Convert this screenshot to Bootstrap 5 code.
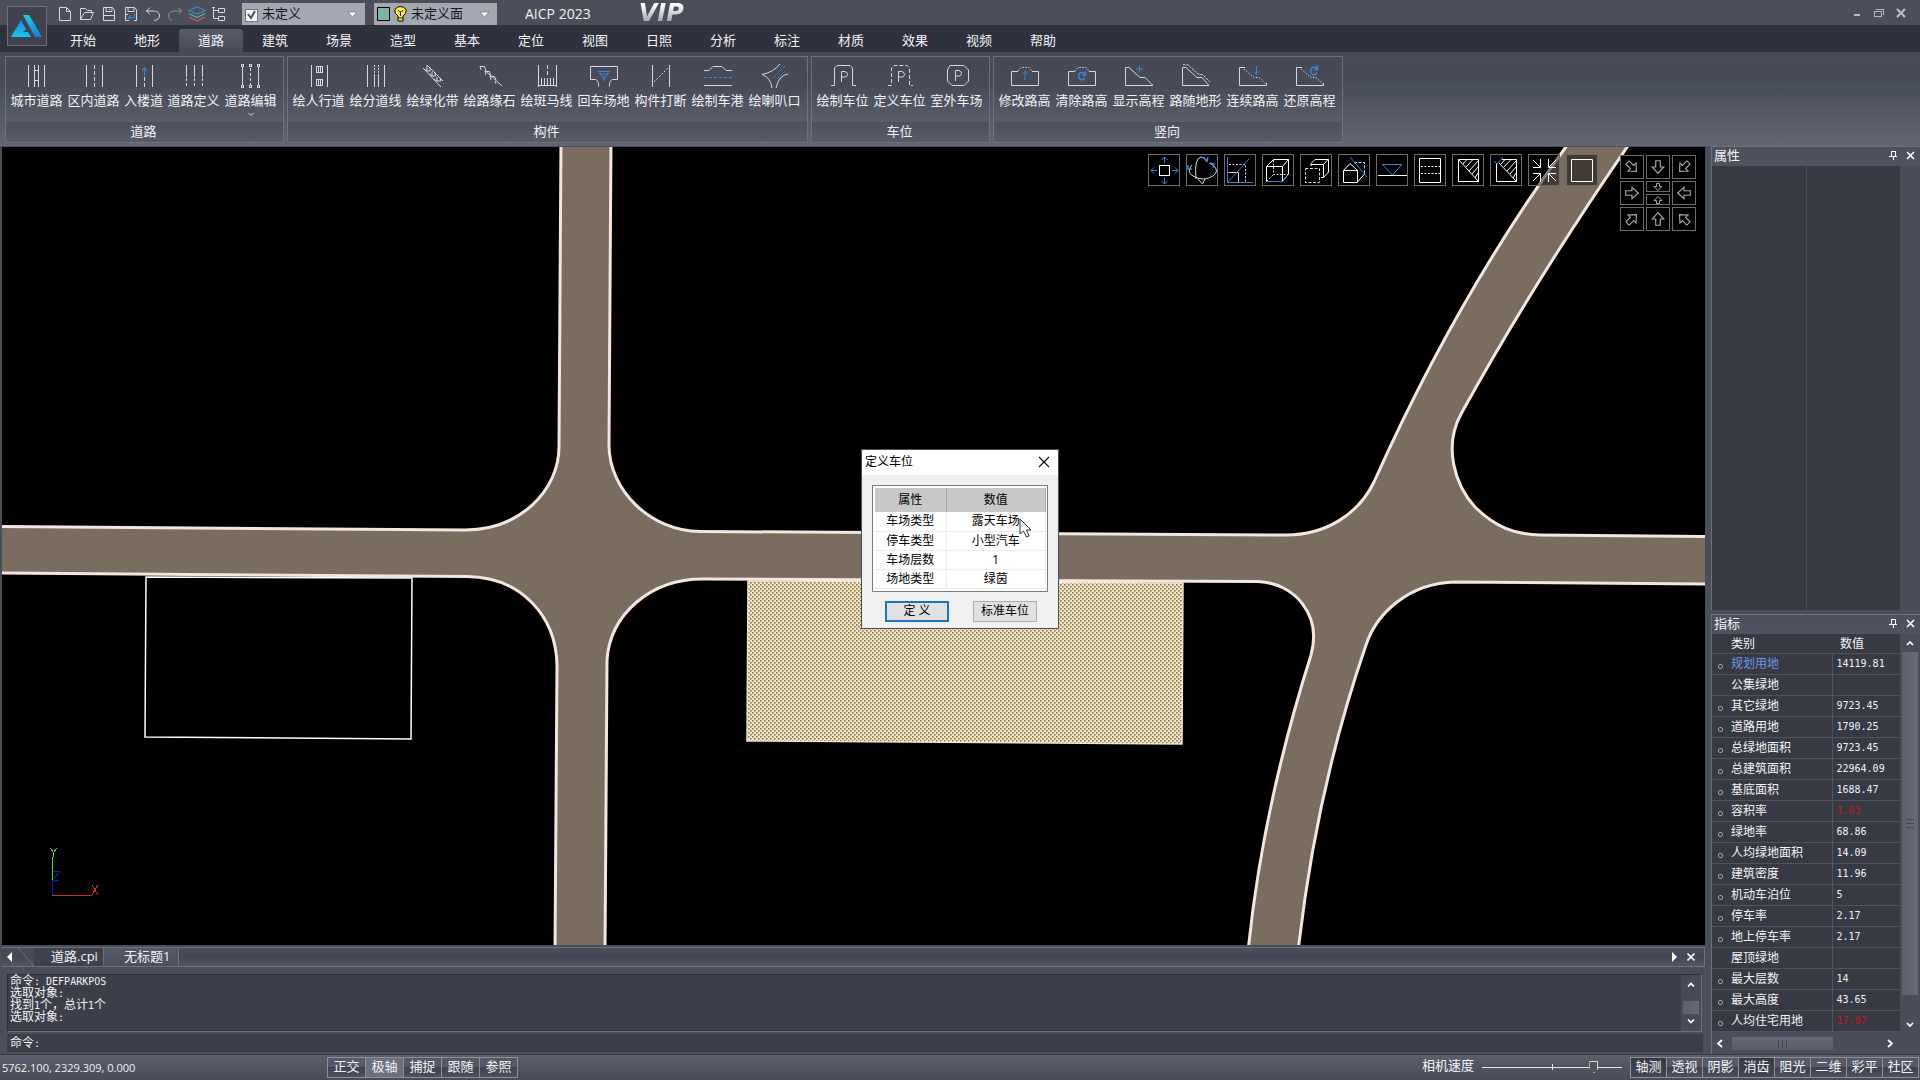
<!DOCTYPE html>
<html lang="zh-CN">
<head>
<meta charset="utf-8">
<meta name="viewport" content="width=device-width, initial-scale=1">
<title>AICP 2023</title>
<link href="https://cdn.jsdelivr.net/npm/bootstrap@5.3.0/dist/css/bootstrap.min.css" rel="stylesheet">
<style>
:root{--ui:"Open Sans","Noto Sans CJK SC",sans-serif;--edge:#6d707d;--dark:#373a43;--line:#50535f;}
body{font-family:var(--ui);font-size:13px;line-height:18px;color:#f2f3f6;background:#4a4d5a;overflow:hidden}
button,select,input{font:inherit;color:inherit}
button{background:none;border:0;padding:0}
svg{display:block}
.ln{fill:none;stroke:#d3d7e0;stroke-width:1}
.bl{stroke:#3f83d6}
.crisp{shape-rendering:crispEdges}

/* title bar and menu */
.app-head{background:linear-gradient(#4c4e5a 0 25px,#2f323d 25px)}
.logo-cell{width:51px;padding:6px 4px 6px 7px;background:linear-gradient(#4c4e5a 0 25px,#2f323d 25px)}
.logo-btn{width:40px;height:40px;border:1px solid #6b6e7b;background:#40434f;place-items:center}
.title-row{height:25px}
.quick-bar{padding:3px 12px 0 3px}
.quick{width:22px;height:22px;display:grid;place-items:center}
.combo{width:123px;height:22px;margin-top:3px;background:#a4a8b3;color:#15171c;padding:0 3px}
.combo+.combo{margin-left:9px}
.combo select{appearance:none;background:none;border:0;outline:0;padding:0 0 2px;flex:1;min-width:0;line-height:18px}
.combo input{appearance:none;width:13px;height:13px;margin:0;background:#f6f8fb;border:1px solid #6b7486}
.tick-wrap{position:relative;width:13px;height:13px}
.tick-wrap svg{position:absolute;left:0;top:0;pointer-events:none}
.app-name{line-height:27px;font-size:14px}
.vip{font:italic bold 24px/26px "DejaVu Sans",sans-serif;background:linear-gradient(#fff 20%,#a9adbd 80%);-webkit-background-clip:text;background-clip:text;color:transparent}
.win{width:22px;height:22px;display:grid;place-items:center}
.wins{padding-top:2px}
.menu-tabs{height:27px;padding-top:4px}
.menu-tab{width:64px;height:23px;line-height:22px;text-align:center;color:#f2f3f6;text-decoration:none;border-radius:3px 3px 0 0}
.menu-tab.active{background:linear-gradient(#595c69,#474a56)}

/* ribbon */
.ribbon{height:94px;padding:4px 5px 3px;gap:3px;background:linear-gradient(#494b58,#464b58 30%,#555865 65%,#626572)}
.rb-panel{border:1px solid var(--edge);background:linear-gradient(#464955,#474b57 35%,#595c69 76%,#4d505d 76%,#585b68);height:87px}
.rb-items{padding:7px 4px 0 2px;height:67px}
.rb-item{width:57px;display:flex;flex-direction:column;align-items:center}
.rb-item.narrow{width:43px}
.rb-item svg{margin-bottom:3px}
.rb-item span{white-space:nowrap}
.rb-item .tall{margin-bottom:1px}
.rb-item .down{margin:3px 0 0}
.rb-title{line-height:14px;text-align:center;padding-right:2px}

/* drawing area */
.left-pane{padding:1px 0 2px 2px;min-width:0}
.canvas{background:#000;position:relative;min-height:0;overflow:hidden}
.scene{position:absolute;inset:0;width:100%;height:100%}
.overlay{position:absolute;top:7px;right:9px;gap:22px}
.tools{gap:6px}
.vt{width:32px;height:32px;border:1px solid #6c6c69;background:rgba(0,0,0,.45);display:grid;place-items:center}
.pad{display:grid;grid-template-columns:repeat(3,24px);gap:2px;margin-top:1px}
.pad button{height:24px;border:1px solid #6c6c69;background:#000;display:grid;place-items:center}
.pad .halves{display:grid;gap:2px}
.pad .halves button{height:11px}
.pad svg{fill:none;stroke:#a8a8a6;stroke-width:1}

.dlg{position:absolute;left:859px;top:302px;width:198px;border:1px solid #4f4f4f;background:#f0f0f0;color:#000;font-size:12px}
.dlg-head{background:#fff;height:25px;padding:0 7px 2px 3px;font-size:12px}
.dlg-body{padding:10px 10px 6px}
.grid-box{border:1px solid #7c7c7c;background:#fff;padding:2px 1px 2px 2px}
.grid-box table{width:100%;border-collapse:collapse;table-layout:fixed;text-align:center}
.grid-box th{background:#c8c8c8;font-weight:400;height:24px;padding:0;border-right:1px solid #a8a8a8}
.grid-box td{height:19px;line-height:18px;padding:0;border:0 solid #ececec;border-width:0 1px 1px 0}
.dlg-foot{padding:9px 11px 0 13px}
.dlg-btn{width:64px;height:21px;background:#e1e1e1;border:1px solid #adadad;line-height:18px}
.dlg-btn.main{border:2px solid #1f72bd;line-height:16px}
.cursor{position:absolute;left:1017px;top:371px}

/* document tabs */
.doc-bar{height:20px;margin:2px 0 7px;border:1px solid var(--edge);border-width:1px 1px 1px 0;background:linear-gradient(#4b4e5b,#444753 50%,#525562)}
.doc-tab{color:#f2f3f6;text-decoration:none;height:18px;line-height:16px;border-right:1px solid var(--edge)}
.doc-tab.on{background:#3f424d;padding:0 5px 0 17px}
.doc-tab.off{background:linear-gradient(#565967,#4c4f5c);padding:0 8px 0 20px}
.cm{font-size:12px;line-height:12px}
.ml{font-family:"DejaVu Sans Mono",monospace;font-size:10px}
.history{height:58px;margin:0 3px 2px 5px;background:#3c3f4a;border:1px solid #2c2f38;border-color:#2c2f38 #6d707d #6d707d #2c2f38}
.history-text{padding:0 2px}
.history-text p{height:12px;margin:0;white-space:pre}
.sb{background:#484b57}
.history .sb{width:20px;padding:7px 0}
.cmd-line{height:18px;margin:0 2px 0 5px;background:#3c3f4a;padding:0 3px}
.cmd-line input{flex:1;background:none;border:0;outline:0}
.cmd-line label{line-height:17px}
.thumb{background:linear-gradient(90deg,#5d606d,#666976)}
.sb .thumb{width:16px;height:13px;margin-top:8px}

/* side panels */
.right-pane{width:215px;padding-left:6px;gap:4px}
.side{border:1px solid var(--edge);border-width:1px 0 0 1px}
.side-head{height:19px;padding:0 5px 2px 2px;background:linear-gradient(#4c4f5c,#505360)}
.side-head h2{font-size:13px;line-height:17px;font-weight:400;margin:0}
.prop-body{background:var(--dark);margin-right:20px;display:grid;grid-template-columns:94px 1fr}
.prop-body div+div{border-left:1px solid #4b4e59}
.idx{border-collapse:collapse;width:188px;table-layout:fixed;font-size:12px;background:var(--dark)}
.idx th{height:20px;line-height:19px;font-weight:400;padding:0 0 0 8px}
.idx th:first-child{padding-left:19px}
.idx td{height:21px;line-height:20px;padding:0 0 0 4px;white-space:nowrap}
.idx td:first-child{padding-left:6px}
.idx tr{border-bottom:1px solid var(--line)}
.idx td:first-child{border-right:1px solid var(--line)}
.idx i{display:inline-block;width:5px;height:5px;border:1px solid #9a9da6;border-radius:2px;margin-right:8px;vertical-align:-1px;visibility:hidden}
.idx .dot i{visibility:visible}
.idx .first a{color:#6f97e8}
.idx a{color:inherit;text-decoration:none}
.idx .red{color:#c4151b}
.vs{width:19px}
.vs .thumb{width:16px;height:343px;display:grid;place-items:center}
.hs{height:22px;padding:3px 26px 2px 4px}
.hs .thumb{width:101px;height:13px;display:grid;place-items:center;background:linear-gradient(#656875,#5a5d6a)}

/* status bar */
.status{height:26px;border-top:1px solid #363944;background:linear-gradient(#5b5e6b,#474a57);padding:2px 1px 3px 2px}
.coords{font-size:11px;line-height:22px;width:326px}
.sw{height:21px;width:37px;border:1px solid #8d909c;margin-left:-1px;background:linear-gradient(#555866 45%,#3f424e 50%,#4d505d);line-height:16px;padding-bottom:3px}
.sw.lit{background:#6c707e}
.sw.dk{background:linear-gradient(#363944,#444753)}
.sw-l .sw{width:39px}
.status label{line-height:17px}
.speed{appearance:none;width:140px;height:16px;margin:2px 9px 0 0;background:linear-gradient(#e4e6ec,#e4e6ec) 0 8px/100% 1px no-repeat,linear-gradient(#e4e6ec,#e4e6ec) 50% 5px/1px 6px no-repeat}
.speed::-webkit-slider-thumb{appearance:none;width:9px;height:12px;border:1px solid #d9dce3;background:#555;clip-path:polygon(0 0,100% 0,100% 65%,50% 100%,0 65%)}
</style>
</head>
<body class="vh-100 d-flex flex-column">

<header class="app-head d-flex">
  <div class="logo-cell"><button class="logo-btn d-grid" aria-label="应用菜单">
    <svg width="32" height="24" viewBox="0 0 32 24"><defs><linearGradient id="lg" x1="0" y1="0" x2="0" y2="1"><stop offset="0" stop-color="#1b86e8"/><stop offset="1" stop-color="#14c8f0"/></linearGradient><linearGradient id="lg2" x1="0" y1="0" x2="0" y2="1"><stop offset="0" stop-color="#12d0ee"/><stop offset="1" stop-color="#2277dd"/></linearGradient></defs><path d="M10 6L15 15L12 18H17L20 23H0Z" fill="url(#lg)"/><path d="M12 1H18L31 23H24Z" fill="url(#lg2)"/></svg></button></div>
  <div class="flex-grow-1 d-flex flex-column">
    <div class="title-row d-flex">
      <div class="quick-bar d-flex" role="toolbar" aria-label="快速访问">
        <button class="quick" aria-label="新建"><svg width="18" height="16" viewBox="0 0 18 16"><path class="ln" d="M3.500 1.500H10.500L14.500 5.500V14.500H3.500ZM10.500 1.500V5.500H14.500"/></svg></button>
        <button class="quick" aria-label="打开"><svg width="18" height="16" viewBox="0 0 18 16"><path class="ln" d="M2.500 13.500V2.500H7.500L9.500 4.500H13.500V6.500M2.500 13.500H12.500L15.500 6.500H6.500L2.500 13.500"/></svg></button>
        <button class="quick" aria-label="保存"><svg width="18" height="16" viewBox="0 0 18 16"><path class="ln" d="M3.500 1.500H12.500L14.500 3.500V14.500H3.500ZM6 1.500V5.500H12V1.500M4 9.500H14M9.500 3V4"/></svg></button>
        <button class="quick" aria-label="另存"><svg width="18" height="16" viewBox="0 0 18 16"><path class="ln" d="M7 14.500H3.500V1.500H12.500L14.500 3.500V14.500H12M6 1.500V5.500H12V1.500M4 8.500H6"/><path class="ln bl" d="M12.500 8V11.500H6.500M9 9L6.500 11.500L9 14"/></svg></button>
        <button class="quick" aria-label="撤销"><svg width="18" height="16" viewBox="0 0 18 16"><path class="ln" d="M6 1.500L2.500 5L6 8.500M2.500 5H10Q15.500 5.500 15.500 10Q15 14 10 14.500"/></svg></button>
        <button class="quick" aria-label="重做"><svg width="18" height="16" viewBox="0 0 18 16"><path fill="none" stroke="#8b8e99" d="M12 1.500L15.500 5L12 8.500M15.500 5H8Q2.500 5.500 2.500 10Q3 14 6 14.500"/></svg></button>
        <button class="quick" aria-label="图层"><svg width="18" height="16" viewBox="0 0 18 16" fill="none" stroke-width="1.300"><path stroke="#3f83d6" d="M9 1L17 4.500L9 8L1 4.500Z"/><path stroke="#4fb98a" d="M1 7.500L9 11.500L17 7.500"/><path stroke="#d2585c" d="M1 11L9 15L17 11"/></svg></button>
        <button class="quick" aria-label="结构"><svg width="18" height="16" viewBox="0 0 18 16"><path class="ln" d="M3.500 1V12.500H8M3.500 4.500H8M8.500 2.500H14.500V6.500H8.500ZM8.500 10.500H14.500V14.500H8.500ZM2 1.500H5"/></svg></button>
      </div>
      <div class="combo d-flex align-items-center gap-1 flex-shrink-0">
        <span class="tick-wrap"><input type="checkbox" id="lay" checked aria-label="图层可见"><svg width="13" height="13" viewBox="0 0 13 13"><path d="M3 6L6 10L10 3" fill="none" stroke="#3d4f80" stroke-width="2"/></svg></span>
        <select aria-label="图层"><option>未定义</option></select>
        <svg width="11" height="7" viewBox="0 0 11 7"><path d="M1 1H10L5.500 6Z" fill="#fff" stroke="#6d7078" stroke-width=".7"/></svg><span></span>
      </div>
      <div class="combo d-flex align-items-center flex-shrink-0">
        <svg width="13" height="14" viewBox="0 0 13 14"><path d="M.5 .5H12.500V13.500H.5Z" fill="#7db5a0" stroke="#000"/></svg>
        <svg class="ms-1 me-1" width="13" height="16" viewBox="0 0 13 16"><path d="M4 10Q.6 7.500 .8 5Q1.500 .8 6.500 .6Q11.500 .8 12.200 5Q12.400 7.500 9 10V15H4Z" fill="#ffee3c" stroke="#000"/><path d="M4 12H9M4 4L5.500 6L6.500 5L7.500 6L9 4M6.500 6V10" stroke="#222" fill="none"/></svg>
        <select aria-label="面材质"><option>未定义面</option></select>
        <svg width="11" height="7" viewBox="0 0 11 7"><path d="M1 1H10L5.500 6Z" fill="#fff" stroke="#6d7078" stroke-width=".7"/></svg><span class="ms-1"></span>
      </div>
      <div class="app-name ms-4 ps-1">AICP 2023</div>
      <div class="vip ms-5">VIP</div>
      <div class="wins ms-auto d-flex me-2">
        <button class="win" aria-label="最小化"><svg class="crisp" width="12" height="12"><path d="M3 8H9" stroke="#b9bcc6" stroke-width="2"/></svg></button>
        <button class="win" aria-label="还原"><svg class="crisp" width="12" height="12"><path d="M1.500 4.500H8.500V9.500H1.500ZM3 2.500H10.500V8" fill="none" stroke="#b9bcc6"/></svg></button>
        <button class="win" aria-label="关闭"><svg width="12" height="12"><path d="M2 2L10 10M10 2L2 10" stroke="#b9bcc6" stroke-width="2.200"/></svg></button>
      </div>
    </div>
    <nav class="menu-tabs d-flex">
      <a class="menu-tab" href="#">开始</a><a class="menu-tab" href="#">地形</a><a class="menu-tab active" href="#">道路</a><a class="menu-tab" href="#">建筑</a><a class="menu-tab" href="#">场景</a><a class="menu-tab" href="#">造型</a><a class="menu-tab" href="#">基本</a><a class="menu-tab" href="#">定位</a><a class="menu-tab" href="#">视图</a><a class="menu-tab" href="#">日照</a><a class="menu-tab" href="#">分析</a><a class="menu-tab" href="#">标注</a><a class="menu-tab" href="#">材质</a><a class="menu-tab" href="#">效果</a><a class="menu-tab" href="#">视频</a><a class="menu-tab" href="#">帮助</a>
    </nav>
  </div>
</header>

<div class="ribbon d-flex">
  <section class="rb-panel">
    <div class="rb-items d-flex">
      <button class="rb-item"><svg class="ln crisp" width="28" height="24"><path d="M5.500 1V23M21.500 1V23M11.500 1V23M15.500 1V23M11.500 6.500H15.500M11.500 16.500H15.500"/></svg><span>城市道路</span></button>
      <button class="rb-item"><svg class="ln crisp" width="28" height="24"><path d="M6.500 1V23M22.500 1V23"/><path d="M14.500 1V23" stroke-dasharray="4 2"/></svg><span>区内道路</span></button>
      <button class="rb-item narrow"><svg class="ln crisp" width="28" height="24"><path d="M6.500 1V23M22.500 1V23"/><path d="M14.500 13V23" stroke-dasharray="4 2"/><path class="bl" d="M14.500 3V12M12 6.500L14.500 3.500L17 6.500"/></svg><span>入楼道</span></button>
      <button class="rb-item"><svg class="ln crisp" width="28" height="24"><path d="M6.500 1V13M14.500 1V13M22.500 1V13"/><path d="M6.500 14V23M14.500 14V23M22.500 14V23" stroke-dasharray="3 2"/></svg><span>道路定义</span></button>
      <button class="rb-item"><svg class="ln crisp" width="28" height="24"><path d="M5.500 3V21M21.500 3V21M4.500 .5h2v2h-2zM4.500 21.500h2v2h-2zM20.500 .5h2v2h-2zM20.500 21.500h2v2h-2zM12.500 .5h2v2h-2zM12.500 21.500h2v2h-2z"/><path d="M13.500 4V21" stroke-dasharray="3 2"/></svg><span>道路编辑</span><svg class="ln down" width="8" height="5"><path d="M1.500 1L4 3.500L6.500 1"/></svg></button>
    </div>
    <div class="rb-title">道路</div>
  </section>
  <section class="rb-panel">
    <div class="rb-items d-flex">
      <button class="rb-item"><svg class="ln crisp" width="28" height="24"><path d="M6.500 1V23M22.500 1V23M11.500 2.500h6v6h-6zM11.500 15.500h6v6h-6zM13.500 3v5M15.500 3v5M13.500 16v5M15.500 16v5"/></svg><span>绘人行道</span></button>
      <button class="rb-item"><svg class="ln crisp" width="28" height="24"><path d="M5.500 1V23M22.500 1V23M12.500 12V23M16.500 12V23"/><path d="M12.500 1V12M16.500 1V12" stroke-dasharray="2 1"/></svg><span>绘分道线</span></button>
      <button class="rb-item"><svg class="ln" width="28" height="24"><path d="M4 4L22 23M8 1L24 17M5 5L8 7L8 1.500M8 7H11V3.500M10 9.500L13 12V7.500M13 12H16.500L16 8.500M15 15L18 17V13M18 17L22 17L21 14"/></svg><span>绘绿化带</span></button>
      <button class="rb-item"><svg class="ln" width="28" height="24"><path d="M9 6.500L26 22M4 2L5 6M4 2.500H8.500L10 7M9 7L10 11M9 7.500H13.500L15 12M14 12L15 16M14 12.500H18.500L20 16M19 17L20 20"/></svg><span>绘路缘石</span></button>
      <button class="rb-item"><svg class="ln crisp" width="28" height="24"><path d="M5.500 1V23M23.500 1V23M5.500 21.500H23.500M8.500 14V22M11.500 14V22M14.500 14V22M17.500 14V22M20.500 14V22"/><path d="M14.500 1V12" stroke-dasharray="4 2"/></svg><span>绘斑马线</span></button>
      <button class="rb-item"><svg class="ln" width="28" height="24"><path d="M8.500 22.500Q9 16.500 5.500 15.500H.5V2.500H27.500V15.500H22.500Q19 16.500 19.500 22.500"/><path class="bl" d="M8 7.500H20L14 15ZM14 12V17M10 9L14 11L18 9"/></svg><span>回车场地</span></button>
      <button class="rb-item"><svg class="ln" width="28" height="24"><path d="M5.500 1V23M22.500 1V23"/><path d="M7 18L21 4" stroke-dasharray="2 1.500"/></svg><span>构件打断</span></button>
      <button class="rb-item"><svg class="ln" width="28" height="24"><path d="M0 6.500H5L9 2.500H18L22 6.500H28M0 21.500H28"/><path class="bl" d="M0 13.500H28" stroke-dasharray="3 2"/></svg><span>绘制车港</span></button>
      <button class="rb-item"><svg class="ln tall" width="28" height="26"><path d="M19 0Q13 8 1 10.500Q10 14 11 24M27 10Q18 11 15 24"/><path class="bl" d="M24 2L12 14M16 15L24 7" stroke-dasharray="3 1.500"/></svg><span>绘喇叭口</span></button>
    </div>
    <div class="rb-title">构件</div>
  </section>
  <section class="rb-panel">
    <div class="rb-items d-flex">
      <button class="rb-item"><svg class="ln" width="28" height="24"><path d="M2 21.500H5.500V4L8 1.500H21L23.500 4V21.500H27M12.500 18V7.500H16Q18.500 8.500 18.500 10.500Q18 13 16 13H12.500"/></svg><span>绘制车位</span></button>
      <button class="rb-item"><svg class="ln" width="28" height="24"><path d="M2 21.500H5.500V4L8 1.500H21L23.500 4V21.500H27" stroke-dasharray="4 2"/><path d="M12.500 18V7.500H16Q18.500 8.500 18.500 10.500Q18 13 16 13H12.500"/></svg><span>定义车位</span></button>
      <button class="rb-item"><svg class="ln" width="28" height="24"><path d="M7 1.500H21L25.500 6V17L21 21.500H9L4.500 17V6ZM12.500 17V6.500H16Q18.500 7.500 18.500 9.500Q18 12 16 12H12.500"/></svg><span>室外车场</span></button>
    </div>
    <div class="rb-title">车位</div>
  </section>
  <section class="rb-panel">
    <div class="rb-items d-flex">
      <button class="rb-item"><svg class="ln" width="28" height="24"><path d="M7 7.500H.5V21.500H27.500V7.500H21"/><path d="M7 7L10 3.500H18L21 7" stroke-dasharray="1.500 1.500"/><path class="bl" d="M14 7V16M11 10.500L14 7L17 10.500"/></svg><span>修改路高</span></button>
      <button class="rb-item"><svg class="ln" width="28" height="24"><path d="M7 7.500H.5V21.500H27.500V7.500H21"/><path d="M7 7L10 3.500H18L21 7" stroke-dasharray="1.500 1.500"/><path class="bl" stroke-width="1.500" d="M17 9.500Q12 6.500 10.500 11.500Q11 16.500 15 15.500L17 13.500M17.500 7V11H14"/></svg><span>清除路高</span></button>
      <button class="rb-item"><svg class="ln" width="28" height="24"><path d="M.5 21.500V3.500H4L15 13.500H20L28 21.500Z"/><path class="bl" d="M14.500 2V8M11 5H18"/></svg><span>显示高程</span></button>
      <button class="rb-item"><svg class="ln" width="28" height="24"><path d="M.5 21.500V3.500H4L15 13.500H20L27 21.500Z"/><path d="M1 .8H6L16 10L21 11L28 18" stroke-dasharray="2.500 1"/></svg><span>路随地形</span></button>
      <button class="rb-item"><svg class="ln" width="28" height="24"><path d="M6 3.500H.5V21.500H27.500V19"/><path d="M5 5L15 13.500H20L27 20" stroke-dasharray="1.500 1.500"/><path class="bl" d="M17.500 2V10M15 7.500L17.500 10.500L20 7.500"/></svg><span>连续路高</span></button>
      <button class="rb-item"><svg class="ln" width="28" height="24"><path d="M6 3.500H.5V21.500H27.500V19"/><path d="M5 5L15 13.500H20L27 20" stroke-dasharray="1.500 1.500"/><path class="bl" stroke-width="1.500" d="M21 4Q16 1.500 14.500 6.500Q15 11.500 19 10.500L21 8.500M21.500 1.500V5.500H18"/></svg><span>还原高程</span></button>
    </div>
    <div class="rb-title">竖向</div>
  </section>
</div>

<main class="d-flex flex-grow-1 overflow-hidden">
  <div class="left-pane flex-grow-1 d-flex flex-column">
    <div class="canvas flex-grow-1">
      <svg class="scene" viewBox="2 147 1703 798" preserveAspectRatio="xMinYMin slice">
        <defs><pattern id="hatch" width="4" height="4" patternUnits="userSpaceOnUse"><rect width="4" height="4" fill="#f1e9bd"/><rect x="0" y="0" width="1.600" height="1.600" fill="#85735a"/><rect x="2" y="2" width="1.600" height="1.600" fill="#85735a"/></pattern></defs>
        <path d="M748 581L1183 583L1182 744L747 741Z" fill="url(#hatch)" stroke="#efe3cf" stroke-width="1.500"/>
        <path fill="#7a6c5e" stroke="#f3e6e0" stroke-width="3" d="M-4 526.500L465 530C520 530 559 490 559 447L561 140H611L609 445C609 490 650 531 700 531.500L1286 535C1325 535 1358 515 1374 482Q1460 290 1571 140H1632Q1535 280 1461 414C1443 447 1455 485 1475 507C1495 527 1515 534.500 1540 535L1712 536.500V584L1455 582C1410 583 1377 612 1366 645Q1316 790 1298 952H1248Q1262 810 1311 655C1322 615 1295 583 1258 581.500L705 579C650 578 610 615 607 660L605 952H555L557 665C556 615 520 577 467 576.500L-4 573Z"/>
        <path d="M146 577L412 578L411 739L145 737Z" fill="none" stroke="#fff" stroke-width="1.500"/>
        <g fill="none" class="crisp"><path stroke="#5fd35f" d="M52.500 895V857"/><path stroke="#5fd35f" d="M50 848L53.500 852.500L57 848M53.500 852V857"/><path stroke="#1a1ab0" d="M52.500 895V881M53 871.500H59L53 880.500H59"/><path stroke="#c93028" d="M52 895.500H92M92 885L98 895M98 885L92 895"/></g>
      </svg>

      <div class="overlay d-flex align-items-start">
        <div class="tools d-flex" role="toolbar" aria-label="视图工具">
          <button class="vt" aria-label="平移"><svg class="ln" width="30" height="30"><rect x="10.500" y="10.500" width="10" height="10" stroke="#fff"/><path class="bl" d="M15.500 8V2M12.500 5L15.500 2L18.500 5M15.500 23V29M12.500 26L15.500 29L18.500 26M8 15.500H2M5 12.500L2 15.500L5 18.500M23 15.500H29M26 12.500L29 15.500L26 18.500"/></svg></button>
          <button class="vt" aria-label="旋转"><svg class="ln" width="30" height="30"><path d="M5 10Q-1 17 6 21Q16 27 26 21Q33 16 26 10L22 8M9 24Q7 3 14 2Q18 2 20 7M11 24L15.500 29L18 24"/><path class="bl" stroke-width="1.500" d="M16 2L20 6L21 2M1 10V14H5M23 8L27 9L26 13"/></svg></button>
          <button class="vt" aria-label="比例"><svg class="ln" width="30" height="30"><path d="M3.500 17.500H13.500V28"/><path d="M4 9.500H20.500V28" stroke-dasharray="2 1.500"/><path class="bl" d="M2.500 2V27.500H28M3 27L24 4"/></svg></button>
          <button class="vt" aria-label="线框"><svg class="ln" width="30" height="30"><path stroke="#fff" d="M3.500 11.500H19.500V26.500H3.500ZM3.500 11.500L10.500 4.500H25.500L19.500 11.500M25.500 4.500V19L19.500 26.500"/><path d="M10.500 5V19.500H25M10 20L4 26" stroke-dasharray="2 1.500"/><path class="bl" d="M3 26.500H19.500L25 20"/></svg></button>
          <button class="vt" aria-label="消隐"><svg class="ln" width="30" height="30"><path stroke="#fff" d="M10 11V8.500L14 4.500H27.500V17L22.500 22.500H20M10 9.500H22.500V22M22.500 9.500L27 4.500"/><path d="M4.500 13.500H18.500V27.500H4.500Z" stroke-dasharray="3 1.500"/></svg></button>
          <button class="vt" aria-label="剖切"><svg class="ln" width="30" height="30"><path stroke="#fff" d="M4.500 15.500H18.500V27.500H4.500ZM4.500 15.500L11 8.500L18.500 15.500M18.500 27L25.500 19V16"/><path d="M15 7.500H25.500V19" stroke-dasharray="3 1.500"/><path class="bl" d="M11 2L28 22"/></svg></button>
          <button class="vt" aria-label="标高"><svg class="ln" width="30" height="30"><path stroke="#fff" d="M1 20.500H30"/><path class="bl" d="M5.500 9.500H25L15.500 20Z"/></svg></button>
          <button class="vt" aria-label="分层"><svg class="ln" width="30" height="30"><path stroke="#fff" d="M4.500 3.500H25.500V27.500H4.500Z"/><path d="M6 11.500H25M6 18.500H25" stroke="#fff" stroke-dasharray="2 1.500"/></svg></button>
          <button class="vt" aria-label="裁剪"><svg class="ln" width="30" height="30"><path stroke="#fff" d="M5.500 4.500H25.500V26.500H5.500ZM5.500 4.500L25.500 26.500M10 9L14 4.500M13 12L20 4.500M16 16L25 6M19 19L25 12M22 23L25 18"/></svg></button>
          <button class="vt" aria-label="裁剪确认"><svg class="ln" width="30" height="30"><path stroke="#fff" d="M11 4.500H25.500V26.500H5.500V9M8 8L25.500 26.500M10 9L14 4.500M13 12L20 4.500M16 16L25 6M19 19L25 12M22 23L25 18"/><path class="bl" d="M3 6L6 9L12 2"/></svg></button>
          <button class="vt" aria-label="缩小全部"><svg class="ln" width="30" height="30"><path stroke="#fff" d="M4 12.500H11.500V4M4 5L11 12M19.500 4V12.500H27M27 5L20 12M4 18.500H11.500V27M4 26L11 19M19.500 27V18.500H27M27 26L20 19"/></svg></button>
          <button class="vt" aria-label="全屏"><svg class="ln" width="30" height="30"><path stroke="#fff" d="M4.500 4.500H25.500V26.500H4.500Z"/></svg></button>
        </div>
        <div class="pad">
          <button aria-label="右下"><svg width="16" height="16" viewBox="0 0 14 14"><path transform="rotate(-45 7 7)" d="M5 1.500H9V7H12L7 12.500L2 7H5Z"/></svg></button>
          <button aria-label="下"><svg width="16" height="16" viewBox="0 0 14 14"><path d="M5 1.500H9V7H12L7 12.500L2 7H5Z"/></svg></button>
          <button aria-label="左下"><svg width="16" height="16" viewBox="0 0 14 14"><path transform="rotate(45 7 7)" d="M5 1.500H9V7H12L7 12.500L2 7H5Z"/></svg></button>
          <button aria-label="右"><svg width="16" height="16" viewBox="0 0 14 14"><path transform="rotate(-90 7 7)" d="M5 1.500H9V7H12L7 12.500L2 7H5Z"/></svg></button>
          <div class="halves"><button aria-label="降"><svg width="12" height="8"><path d="M4.500 .5H7.500V3.500H10L6 7.500L2 3.500H4.500Z"/></svg></button><button aria-label="升"><svg width="12" height="8"><path d="M4.500 7.500H7.500V4.500H10L6 .5L2 4.500H4.500Z"/></svg></button></div>
          <button aria-label="左"><svg width="16" height="16" viewBox="0 0 14 14"><path transform="rotate(90 7 7)" d="M5 1.500H9V7H12L7 12.500L2 7H5Z"/></svg></button>
          <button aria-label="右上"><svg width="16" height="16" viewBox="0 0 14 14"><path transform="rotate(-135 7 7)" d="M5 1.500H9V7H12L7 12.500L2 7H5Z"/></svg></button>
          <button aria-label="上"><svg width="16" height="16" viewBox="0 0 14 14"><path transform="rotate(180 7 7)" d="M5 1.500H9V7H12L7 12.500L2 7H5Z"/></svg></button>
          <button aria-label="左上"><svg width="16" height="16" viewBox="0 0 14 14"><path transform="rotate(135 7 7)" d="M5 1.500H9V7H12L7 12.500L2 7H5Z"/></svg></button>
        </div>
      </div>

      <div class="dlg" role="dialog" aria-labelledby="dlgt">
        <div class="dlg-head d-flex align-items-center justify-content-between"><span id="dlgt">定义车位</span><button aria-label="关闭"><svg width="14" height="12"><path d="M2 1L12 11M12 1L2 11" stroke="#111" stroke-width="1.200"/></svg></button></div>
        <div class="dlg-body">
          <div class="grid-box"><table><colgroup><col style="width:71px"><col></colgroup>
            <thead><tr><th>属性</th><th>数值</th></tr></thead>
            <tbody><tr><td>车场类型</td><td>露天车场</td></tr><tr><td>停车类型</td><td>小型汽车</td></tr><tr><td>车场层数</td><td>1</td></tr><tr><td>场地类型</td><td>绿茵</td></tr></tbody></table></div>
          <div class="dlg-foot d-flex justify-content-between"><button class="dlg-btn main">定 义</button><button class="dlg-btn">标准车位</button></div>
        </div>
      </div>
      <svg class="cursor" width="14" height="20"><path d="M1 1V16L4.500 13L7.500 19L10 18L7.500 12H12Z" fill="#fff" stroke="#333"/></svg>
    </div>

    <div class="doc-bar d-flex align-items-center">
      <button class="ms-1" aria-label="向左"><svg width="8" height="12"><path d="M6 1V11L1 6Z" fill="#fff"/></svg></button>
      <svg class="ms-1" width="16" height="18"><path d="M0 0L16 18" stroke="#6d707d"/></svg>
      <a class="doc-tab on" href="#">道路.cpi</a><a class="doc-tab off" href="#">无标题1</a>
      <button class="ms-auto" aria-label="向右"><svg width="8" height="12"><path d="M2 1V11L7 6Z" fill="#fff"/></svg></button>
      <button class="ms-2 me-2" aria-label="关闭文档"><svg width="10" height="10"><path d="M1.500 1.500L8.500 8.500M8.500 1.500L1.500 8.500" stroke="#fff" stroke-width="1.700"/></svg></button>
    </div>
    <div class="history d-flex cm">
      <div class="history-text flex-grow-1"><p>命令<span class="ml">: DEFPARKPOS</span></p><p>选取对象<span class="ml">:</span></p><p>找到<span class="ml">1</span>个，总计<span class="ml">1</span>个</p><p>选取对象<span class="ml">:</span></p></div>
      <div class="sb d-flex flex-column align-items-center justify-content-between">
        <svg width="8" height="5"><path d="M1 4.500L4 1.500L7 4.500" fill="none" stroke="#fff" stroke-width="1.700"/></svg>
        <div class="thumb"></div>
        <svg width="8" height="5"><path d="M1 .5L4 3.500L7 .5" fill="none" stroke="#fff" stroke-width="1.700"/></svg>
      </div>
    </div>
    <div class="cmd-line d-flex cm"><label for="cmd">命令<span class="ml">:</span></label><input id="cmd" type="text"></div>
  </div>

  <aside class="right-pane d-flex flex-column flex-shrink-0">
    <section class="side flex-grow-1 d-flex flex-column">
      <div class="side-head d-flex align-items-center"><h2>属性</h2><button class="ms-auto" aria-label="固定"><svg class="crisp" width="9" height="11"><path d="M2.500 1V6M2 1.500H7M6 1V6M0 6.500H8M4.500 7V10" fill="none" stroke="#fff"/></svg></button><button class="ms-2" aria-label="关闭"><svg width="9" height="9"><path d="M1 1L8 8M8 1L1 8" stroke="#fff" stroke-width="1.600"/></svg></button></div>
      <div class="prop-body flex-grow-1"><div></div><div></div></div>
    </section>
    <section class="side">
      <div class="side-head d-flex align-items-center"><h2>指标</h2><button class="ms-auto" aria-label="固定"><svg class="crisp" width="9" height="11"><path d="M2.500 1V6M2 1.500H7M6 1V6M0 6.500H8M4.500 7V10" fill="none" stroke="#fff"/></svg></button><button class="ms-2" aria-label="关闭"><svg width="9" height="9"><path d="M1 1L8 8M8 1L1 8" stroke="#fff" stroke-width="1.600"/></svg></button></div>
      <div class="d-flex">
        <table class="idx">
          <colgroup><col style="width:120px"><col></colgroup>
          <thead><tr><th>类别</th><th>数值</th></tr></thead>
          <tbody>
          <tr class="dot first"><td><i></i><a href="#">规划用地</a></td><td class="ml">14119.81</td></tr>
          <tr><td><i></i>公集绿地</td><td></td></tr>
          <tr class="dot"><td><i></i>其它绿地</td><td class="ml">9723.45</td></tr>
          <tr class="dot"><td><i></i>道路用地</td><td class="ml">1790.25</td></tr>
          <tr class="dot"><td><i></i>总绿地面积</td><td class="ml">9723.45</td></tr>
          <tr class="dot"><td><i></i>总建筑面积</td><td class="ml">22964.09</td></tr>
          <tr class="dot"><td><i></i>基底面积</td><td class="ml">1688.47</td></tr>
          <tr class="dot"><td><i></i>容积率</td><td class="ml red">1.63</td></tr>
          <tr class="dot"><td><i></i>绿地率</td><td class="ml">68.86</td></tr>
          <tr class="dot"><td><i></i>人均绿地面积</td><td class="ml">14.09</td></tr>
          <tr class="dot"><td><i></i>建筑密度</td><td class="ml">11.96</td></tr>
          <tr class="dot"><td><i></i>机动车泊位</td><td class="ml">5</td></tr>
          <tr class="dot"><td><i></i>停车率</td><td class="ml">2.17</td></tr>
          <tr class="dot"><td><i></i>地上停车率</td><td class="ml">2.17</td></tr>
          <tr><td><i></i>屋顶绿地</td><td></td></tr>
          <tr class="dot"><td><i></i>最大层数</td><td class="ml">14</td></tr>
          <tr class="dot"><td><i></i>最大高度</td><td class="ml">43.65</td></tr>
          <tr class="dot"><td><i></i>人均住宅用地</td><td class="ml red">17.87</td></tr>
          </tbody>
        </table>
        <div class="vs d-flex flex-column align-items-center">
          <svg class="my-1" width="8" height="10"><path d="M1 7L4 4L7 7" fill="none" stroke="#fff" stroke-width="1.700"/></svg>
          <div class="thumb"><svg class="crisp" width="8" height="10"><path d="M0 1.500H8M0 5.500H8M0 9.500H8" stroke="#444753"/></svg></div>
          <svg class="mt-auto mb-1" width="8" height="6"><path d="M1 1L4 4L7 1" fill="none" stroke="#fff" stroke-width="1.700"/></svg>
        </div>
      </div>
      <div class="hs d-flex align-items-center">
        <svg width="8" height="9"><path d="M6 1L2 4.500L6 8" fill="none" stroke="#fff" stroke-width="1.700"/></svg>
        <div class="thumb ms-2"><svg class="crisp" width="10" height="8"><path d="M.5 0V8M4.500 0V8M8.500 0V8" stroke="#444753"/></svg></div>
        <svg class="ms-auto" width="8" height="9"><path d="M2 1L6 4.500L2 8" fill="none" stroke="#fff" stroke-width="1.700"/></svg>
      </div>
    </section>
  </aside>
</main>

<footer class="status d-flex">
  <div class="coords">5762.100, 2329.309, 0.000</div>
  <div class="sw-l d-flex"><button class="sw">正交</button><button class="sw lit">极轴</button><button class="sw">捕捉</button><button class="sw">跟随</button><button class="sw">参照</button></div>
  <label class="ms-auto me-2" for="spd">相机速度</label>
  <input class="speed" id="spd" type="range" value="82">
  <div class="d-flex"><button class="sw dk">轴测</button><button class="sw">透视</button><button class="sw">阴影</button><button class="sw dk">消齿</button><button class="sw">阻光</button><button class="sw">二维</button><button class="sw">彩平</button><button class="sw">社区</button></div>
</footer>
<script src="https://cdn.jsdelivr.net/npm/bootstrap@5.3.0/dist/js/bootstrap.bundle.min.js"></script>
</body>
</html>
